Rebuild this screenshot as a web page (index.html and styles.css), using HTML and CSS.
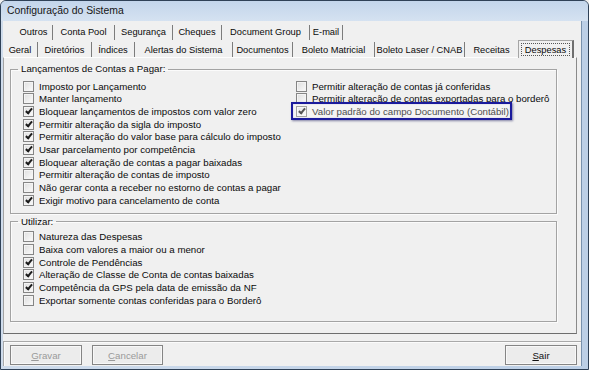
FILE: index.html
```html
<!DOCTYPE html>
<html lang="pt-BR">
<head>
<meta charset="utf-8">
<title>Configuração do Sistema</title>
<link rel="stylesheet" href="styles.css">
</head>
<body>
<div class="window">
  <div class="titlebar">Configuração do Sistema</div>
  <div class="client">
    <div class="tabs">
      <div class="tabrow r1">
        <span class="tab w38">Outros</span>
        <span class="tab w62">Conta Pool</span>
        <span class="tab w58">Segurança</span>
        <span class="tab w49">Cheques</span>
        <span class="tab w88">Document Group</span>
        <span class="tab w33">E-mail</span>
      </div>
      <div class="tabrow r2">
        <span class="tab w35">Geral</span>
        <span class="tab w54">Diretórios</span>
        <span class="tab w43">Índices</span>
        <span class="tab w98">Alertas do Sistema</span>
        <span class="tab w60">Documentos</span>
        <span class="tab w82">Boleto Matricial</span>
        <span class="tab w90">Boleto Laser / CNAB</span>
        <span class="tab w53 noline">Receitas</span>
        <span class="tab sel"><span class="focus">Despesas</span></span>
      </div>
    </div>
    <div class="page">
      <fieldset class="group g1">
        <legend>Lançamentos de Contas a Pagar:</legend>
        <div class="cols">
          <div class="col left">
            <label class="row"><span class="cb"></span>Imposto por Lançamento</label>
            <label class="row"><span class="cb"></span>Manter lançamento</label>
            <label class="row"><span class="cb on"></span>Bloquear lançamentos de impostos com valor zero</label>
            <label class="row"><span class="cb on"></span>Permitir alteração da sigla do imposto</label>
            <label class="row"><span class="cb on"></span>Permitir alteração do valor base para cálculo do imposto</label>
            <label class="row"><span class="cb on"></span>Usar parcelamento por competência</label>
            <label class="row"><span class="cb on"></span>Bloquear alteração de contas a pagar baixadas</label>
            <label class="row"><span class="cb"></span>Permitir alteração de contas de imposto</label>
            <label class="row"><span class="cb"></span>Não gerar conta a receber no estorno de contas a pagar</label>
            <label class="row"><span class="cb on"></span>Exigir motivo para cancelamento de conta</label>
          </div>
          <div class="col right">
            <label class="row"><span class="cb"></span>Permitir alteração de contas já conferidas</label>
            <label class="row"><span class="cb"></span>Permitir alteração de contas exportadas para o borderô</label>
            <label class="row"><span class="cb on"></span>Valor padrão do campo Documento (Contábil)</label>
            <div class="highlight"></div>
          </div>
        </div>
      </fieldset>
      <fieldset class="group g2">
        <legend>Utilizar:</legend>
        <label class="row"><span class="cb"></span>Natureza das Despesas</label>
        <label class="row"><span class="cb"></span>Baixa com valores a maior ou a menor</label>
        <label class="row"><span class="cb on"></span>Controle de Pendências</label>
        <label class="row"><span class="cb on"></span>Alteração de Classe de Conta de contas baixadas</label>
        <label class="row"><span class="cb on"></span>Competência da GPS pela data de emissão da NF</label>
        <label class="row"><span class="cb"></span>Exportar somente contas conferidas para o Borderô</label>
      </fieldset>
    </div>
    <div class="buttonbar">
      <button class="btn disabled"><u>G</u>ravar</button>
      <button class="btn disabled"><u>C</u>ancelar</button>
      <button class="btn exit"><u>S</u>air</button>
    </div>
  </div>
</div>
</body>
</html>
```
FILE: styles.css
```css
html, body {
  margin: 0;
  padding: 0;
  background: #f0f0f0;
}
body {
  width: 589px;
  height: 370px;
  overflow: hidden;
  font-family: "Liberation Sans", Arial, sans-serif;
  font-size: 9.7px;
  color: #0a0a0a;
}
.window {
  width: 589px;
  height: 370px;
  box-sizing: border-box;
  border: 1px solid #2f4157;
  border-radius: 6px 6px 0 0;
  background: linear-gradient(to right, #cfdcec, #bccfe6);
  display: flex;
  flex-direction: column;
  padding: 0 6px 3px 2px;
  overflow: hidden;
}
.titlebar {
  height: 20px;
  flex: none;
  line-height: 19px;
  font-size: 10.4px;
  color: #151515;
  background: linear-gradient(to bottom, #c3d5eb, #d5e2f1);
  margin: 0 -6px 0 -2px;
  padding-left: 6px;
}
.client {
  flex: 1;
  background: #f0f0f0;
  display: flex;
  flex-direction: column;
  border-right: 1px solid #7891ad;
  min-height: 0;
}
.tabs {
  flex: none;
  display: flex;
  flex-direction: column;
  font-size: 9.3px;
}
.tabrow {
  display: flex;
  align-items: flex-end;
}
.tabrow.r1 {
  height: 19px;
  padding-left: 12px;
}
.tabrow.r2 {
  height: 17px;
}
.tab {
  box-sizing: border-box;
  height: 15px;
  line-height: 15px;
  text-align: center;
  border-right: 1px solid #7c7c7c;
  white-space: nowrap;
}
.tab.noline { border-right: none; }
.r2 .tab { height: 15px; line-height: 16px; }
.w33 { width: 33px; }
.w35 { width: 35px; }
.w38 { width: 38px; }
.w43 { width: 43px; }
.w49 { width: 49px; }
.w53 { width: 53px; }
.w54 { width: 54px; }
.w58 { width: 58px; }
.w60 { width: 60px; }
.w62 { width: 62px; }
.w82 { width: 82px; }
.w88 { width: 88px; }
.w90 { width: 90px; }
.w98 { width: 98px; }
.tab.sel {
  width: 56px;
  height: 18px;
  margin-bottom: -1px;
  border: 1px solid #a5a5a5;
  border-right: 2px solid #6f6f6f;
  border-bottom: none;
  background: #f0f0f0;
  padding: 2px 2px 0 2px;
  line-height: 13px;
  position: relative;
  z-index: 1;
}
.focus {
  display: block;
  border: 1px dotted #555;
  height: 13px;
  line-height: 13px;
  box-sizing: border-box;
}
.page {
  box-sizing: border-box;
  width: 574px;
  height: 277px;
  flex: none;
  border-top: 1px solid #fdfdfd;
  border-left: 1px solid #a3a3a3;
  border-right: 1px solid #8a8a8a;
  border-bottom: 1px solid #6e6e6e;
  padding-top: 5px;
  padding-left: 6px;
}
.group {
  box-sizing: border-box;
  width: 547px;
  margin: 0;
  border: 1px solid #a3a3a3;
  box-shadow: inset 1px 1px 0 #fbfbfb, 1px 1px 0 #fbfbfb;
  padding: 5px 0 6px 12px;
  min-width: 0;
}
.group legend {
  font-size: 9.7px;
  line-height: 12px;
  padding: 0 3px;
  margin-left: -5px;
}
.g2 {
  margin-top: 2px;
  padding-top: 3px;
  padding-bottom: 14px;
}
.cols {
  display: flex;
}
.col.left {
  width: 273px;
  flex: none;
}
.col.right {
  position: relative;
  flex: 1;
}
.row {
  display: flex;
  align-items: center;
  gap: 5px;
  height: 12.67px;
  white-space: nowrap;
}
.cb {
  flex: none;
  position: relative;
  box-sizing: border-box;
  width: 11px;
  height: 11px;
  border: 1px solid #858585;
  background: linear-gradient(135deg, #dedede, #fbfbfb);
  box-shadow: inset 0 0 0 1px #f4f4f4;
}
.cb.on::after {
  content: "";
  position: absolute;
  left: 3px;
  top: 0px;
  width: 2px;
  height: 5px;
  border: solid #1b1b1b;
  border-width: 0 2px 2px 0;
  transform: rotate(40deg);
}
.highlight {
  position: absolute;
  left: -5px;
  top: 22px;
  width: 221px;
  height: 18px;
  box-sizing: border-box;
  border: 2px solid #1a1a9c;
  box-shadow: 1px 1px 2px rgba(20, 20, 90, 0.5), inset 0 0 1px rgba(40, 40, 160, 0.5);
  background: rgba(255, 255, 255, 0.25);
  pointer-events: none;
}
.buttonbar {
  flex: 1;
  margin-top: 7px;
  border-top: 1px solid #a9a9a9;
  border-left: 1px solid #a9a9a9;
  box-shadow: inset 1px 1px 0 #fbfbfb;
  display: flex;
  align-items: flex-start;
  padding: 3px 4px 0 6px;
  gap: 10px;
}
.btn {
  box-sizing: border-box;
  width: 72px;
  height: 20px;
  border: 1px solid #858585;
  background: #ececec;
  box-shadow: inset 0 0 0 1px #f8f8f8;
  font-family: "Liberation Sans", Arial, sans-serif;
  font-size: 9.7px;
  color: #111;
  padding: 0;
  margin: 0;
  line-height: 17px;
}
.btn.disabled { color: #9a9a9a; }
.btn:nth-child(2) { width: 71px; }
.btn.exit { margin-left: auto; }
```
